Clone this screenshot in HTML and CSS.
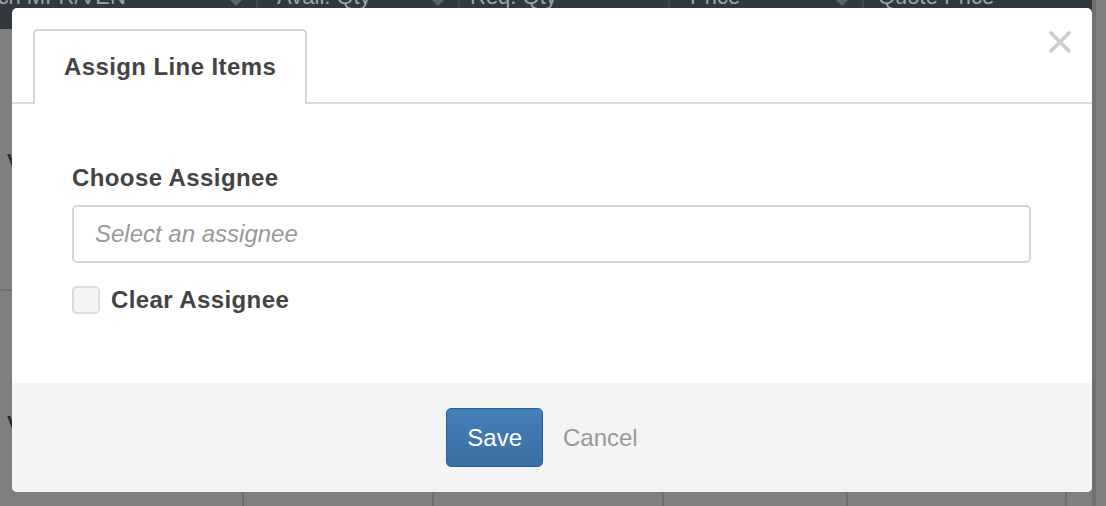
FILE: index.html
```html
<!DOCTYPE html>
<html lang="en">
<head>
    <meta charset="UTF-8">
    <meta name="viewport" content="width=device-width, initial-scale=1.0">
    <title>Assign Line Items</title>
    <link rel="stylesheet" href="styles.css">
</head>
<body>

    <!-- Tabla de fondo (detrás del modal) -->
    <div class="page">
        <div class="table-head">
            <div class="th th-mfr"><span>Search MFR/VEN</span><i class="sort"></i></div>
            <div class="th th-avail"><span>Avail. Qty</span><i class="sort"></i></div>
            <div class="th th-req"><span>Req. Qty</span></div>
            <div class="th th-price"><span>Price</span><i class="sort"></i></div>
            <div class="th th-quote"><span>Quote Price</span></div>
        </div>
        <div class="row row-first">
            <div class="cell">Vendor</div>
        </div>
        <div class="row row-second">
            <div class="cell c1">Vendor</div>
            <div class="cell c2"></div>
            <div class="cell c3"></div>
            <div class="cell c4"></div>
            <div class="cell c5"></div>
            <div class="cell c6"></div>
        </div>
    </div>

    <!-- Modal -->
    <div class="modal">
        <div class="modal-header">
            <div class="tab">Assign Line Items</div>
            <svg class="close" width="24" height="24" viewBox="0 0 24 24">
                <path d="M3 3 L21 21 M21 3 L3 21" stroke="#cdcdcd" stroke-width="3.6" stroke-linecap="round"/>
            </svg>
        </div>
        <div class="modal-body">
            <label class="field-label" for="assignee">Choose Assignee</label>
            <input class="select" type="text" id="assignee" placeholder="Select an assignee">
            <label class="check-row">
                <input class="checkbox" type="checkbox">
                Clear Assignee
            </label>
        </div>
        <div class="modal-footer">
            <button class="btn-save">Save</button>
            <button class="btn-cancel">Cancel</button>
        </div>
    </div>

</body>
</html>
```

FILE: styles.css
```css
body {
    margin: 0;
    height: 506px;
    overflow: hidden;
    position: relative;
    font-family: "Liberation Sans", Arial, sans-serif;
    background-color: #7f7f7f; /* fondo oscurecido */
}
.page {
    width: 1096px;
    box-sizing: border-box;
    border-right: 4px solid #717171;
}
.table-head {
    display: flex;
    height: 29px;
    overflow: hidden;
    background-color: #31383f;
}
.th {
    display: flex;
    align-items: flex-start;
    box-sizing: border-box;
    overflow: hidden;
    white-space: nowrap;
    font-size: 22px;
    line-height: 22px;
    color: #9ea3a8;
    border-left: 2px solid #40464d;
}
.th span {
    margin-top: -14px;
}
.th-mfr { width: 256px; border-left: none; }
.th-mfr span { margin-left: -49px; }
.th-avail { width: 202px; padding-left: 19px; }
.th-req { width: 210px; padding-left: 10px; }
.th-price { width: 194px; padding-left: 20px; }
.th-quote { flex: 1; padding-left: 14px; }
.sort {
    margin-left: auto;
    margin-right: 14px;
    width: 0;
    height: 0;
    border-left: 6px solid transparent;
    border-right: 6px solid transparent;
    border-top: 6px solid #5c636a;
}
.row {
    display: flex;
    height: 260px;
    border-bottom: 2px solid #707070;
}
.row-second {
    height: 215px;
    border-bottom: none;
}
.cell {
    box-sizing: border-box;
    padding: 120px 0 0 7px;
    font-size: 21px;
    line-height: 24px;
    font-weight: bold;
    color: #2a2a2a;
}
.row-second .cell + .cell { border-left: 2px solid #6e6e6e; }
.c1 { width: 242px; }
.c2 { width: 190px; }
.c3 { width: 230px; }
.c4 { width: 184px; }
.c5 { width: 219px; }
.c6 { flex: 1; }

/* Modal */
.modal {
    position: absolute;
    left: 12px;
    top: 8px;
    width: 1080px;
    height: 484px;
    display: flex;
    flex-direction: column;
    overflow: hidden;
    background-color: white;
    border-radius: 5px;
}
.modal-header {
    display: flex;
    justify-content: space-between;
    align-items: flex-start;
    padding: 21px 20px 0 21px;
    border-bottom: 2px solid #d9d9d9;
}
.tab {
    width: 274px;
    height: 75px;
    box-sizing: border-box;
    display: flex;
    align-items: center;
    padding: 0 0 2px 29px;
    margin-bottom: -2px;
    background-color: white;
    border: 2px solid #d6d6d6;
    border-bottom: none;
    border-radius: 5px 5px 0 0;
    font-size: 24px;
    font-weight: bold;
    letter-spacing: 0.4px;
    color: #444;
}
.close {
    margin-top: 1px;
}
.modal-body {
    flex: 1;
    padding: 60px 61px 0 60px;
}
.field-label {
    display: block;
    margin-bottom: 13px;
    font-size: 24px;
    line-height: 28px;
    font-weight: bold;
    letter-spacing: 0.4px;
    color: #444;
}
.select {
    display: block;
    width: 100%;
    height: 58px;
    box-sizing: border-box;
    margin: 0;
    padding: 0 0 0 21px;
    border: 2px solid #d6d6d6;
    border-radius: 5px;
    outline: none;
    font-family: inherit;
    font-size: 24px;
    font-style: italic;
}
.select::placeholder {
    color: #999;
}
.check-row {
    display: flex;
    align-items: center;
    gap: 11px;
    margin-top: 23px;
    font-size: 24px;
    line-height: 28px;
    font-weight: bold;
    letter-spacing: 0.4px;
    color: #444;
}
.checkbox {
    appearance: none;
    width: 28px;
    height: 28px;
    box-sizing: border-box;
    margin: 0;
    background-color: #f4f4f4;
    border: 2px solid #dcdcdc;
    border-radius: 5px;
}
.modal-footer {
    height: 109px;
    display: flex;
    justify-content: center;
    align-items: center;
    background-color: #f4f4f4;
}
.btn-save {
    height: 59px;
    padding: 0 20px;
    border: 1px solid #2d5d8b;
    border-radius: 5px;
    background: linear-gradient(#4480b8, #3a6ea3);
    color: white;
    font-family: inherit;
    font-size: 24px;
}
.btn-cancel {
    height: 59px;
    padding: 0 20px;
    border: none;
    background: none;
    color: #999;
    font-family: inherit;
    font-size: 24px;
}
```
